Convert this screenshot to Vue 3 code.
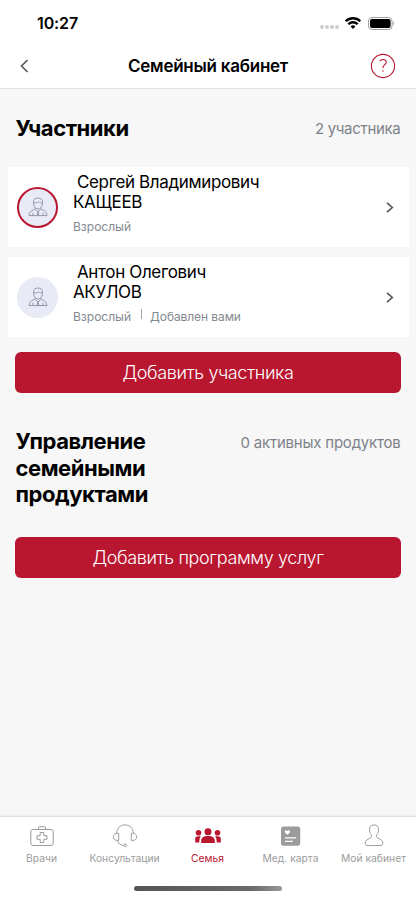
<script setup>
const members = [
  { name: 'Сергей Владимирович', surname: 'КАЩЕЕВ', tags: ['Взрослый'], active: true },
  { name: 'Антон Олегович', surname: 'АКУЛОВ', tags: ['Взрослый', 'Добавлен вами'], active: false },
]
const tabs = [
  { id: 'doctors', label: 'Врачи' },
  { id: 'consult', label: 'Консультации' },
  { id: 'family', label: 'Семья' },
  { id: 'record', label: 'Мед. карта' },
  { id: 'profile', label: 'Мой кабинет' },
]
</script>

<template>
  <div class="screen">
    <div class="status">
      <span class="time">10:27</span>
      <div class="indicators">
        <svg class="dots" width="20" height="4" viewBox="0 0 20 4" fill="#cbcbcb">
          <circle cx="2" cy="2" r="1.9" /><circle cx="7" cy="2" r="1.9" /><circle cx="12" cy="2" r="1.9" /><circle cx="17" cy="2" r="1.9" />
        </svg>
        <svg class="wifi" width="16" height="12" viewBox="0 0 16 12" fill="none" stroke="#000" stroke-width="2.3">
          <path d="M.7 4.300a10.300 10.300 0 0 1 14.600 0" /><path d="M3.300 7.200a6.600 6.600 0 0 1 9.400 0" /><path d="M8 11.900 5.600 9.500a3.400 3.400 0 0 1 4.800 0Z" fill="#000" stroke="none" />
        </svg>
        <svg width="27" height="13" viewBox="0 0 27 13">
          <rect x=".5" y=".5" width="23.6" height="12" rx="3.5" fill="none" stroke="#a0a0a0" />
          <rect x="2" y="2" width="20.6" height="9" rx="2" />
          <path d="M25.200 4.800v3.400c1.300-.6 1.300-2.800 0-3.400Z" fill="#999" />
        </svg>
      </div>
    </div>
    <header class="header">
      <svg class="back" width="9" height="14" viewBox="0 0 9 14" fill="none" stroke="#555" stroke-width="1.6"><path d="M7.5 1 1.5 7l6 6" /></svg>
      <h1>Семейный кабинет</h1>
      <svg class="help" width="26" height="26" viewBox="0 0 26 26" fill="none" stroke="#b91630" stroke-width="1.1">
        <circle cx="13" cy="13" r="11.6" />
        <path d="M9.900 8.300c.7-1.200 1.700-1.800 3-1.800 2 0 3.300 1.100 3.300 2.700 0 2.500-3.200 2.700-3.200 5v1M13 17.200v1.500" />
      </svg>
    </header>

    <main>
      <div class="section members-head">
        <h2>Участники</h2><span class="count c1">2 участника</span>
      </div>
      <div class="cards">
        <article v-for="m in members" :key="m.surname" class="card">
          <div class="avatar" :class="{ active: m.active }">
            <svg width="20" height="20" viewBox="0 0 20 20" fill="none" stroke="#8b8fa3" stroke-width=".9" stroke-linejoin="round">
              <path d="M5.500 5.600C5.300 2.600 7 1 10 1s4.700 1.600 4.500 4.600c0 3.800-1.700 6.300-4.500 6.300s-4.500-2.500-4.500-6.300ZM5.500 5.400c2.500.9 4 .7 5.200-.6 1 1 2.200 1.200 3.800.8M7.400 10.800c-.2 1.500-1 1.800-2.500 2.300C2.600 13.900 1.400 15.500 1 18.600h18c-.4-3.100-1.600-4.700-3.900-5.500-1.500-.5-2.300-.8-2.500-2.300" />
              <path d="m7.200 12.300 2.800 2.500 2.800-2.500M10 14.800l-1 3.800M10 14.800l1 3.800M4.900 15.800v2.800M15.100 15.800v2.800" />
            </svg>
          </div>
          <div class="info">
            <div class="name"><span class="first">{{ m.name }}</span><span>{{ m.surname }}</span></div>
            <div class="tags"><span v-for="t in m.tags" :key="t">{{ t }}</span></div>
          </div>
          <svg class="chevron" width="8" height="11" viewBox="0 0 8 11" fill="none" stroke="#555" stroke-width="1.6"><path d="m1 .9 5.3 4.6L1 10.1" /></svg>
        </article>
      </div>
      <button class="b1">Добавить участника</button>
      <div class="section products-head">
        <h2>Управление<br>семейными<br>продуктами</h2><span class="count c2">0 активных продуктов</span>
      </div>
      <button class="b2">Добавить программу услуг</button>
    </main>

    <nav>
      <div v-for="t in tabs" :key="t.id" class="tab" :class="t.id">
        <svg width="28" height="26" viewBox="0 0 28 26" fill="none" stroke="#9b9b9b" stroke-width="1">
          <template v-if="t.id === 'doctors'">
            <rect x="2.8" y="5.500" width="22.4" height="16" rx="2.2" />
            <path d="M10.500 5.500V4c0-.8.5-1.300 1.300-1.300h4.400c.8 0 1.300.5 1.300 1.300v1.500M12.200 8.500h3.600v3.200H19v3.600h-3.200v3.200h-3.600v-3.200H9v-3.600h3.200Z" />
          </template>
          <template v-else-if="t.id === 'consult'">
            <path d="M5.500 9.300C6 4.100 9.200.9 14 .9s8 3.200 8.500 8.400M7.700 9.300v7.100H6.200c-5.200 0-5.200-7.100 0-7.100ZM20.300 9.300v7.100h1.500c5.200 0 5.200-7.100 0-7.100ZM6.700 16.500c.7 3.500 2.800 4.800 6 4.900" />
            <circle cx="14.2" cy="21.300" r="1.4" />
          </template>
          <g v-else-if="t.id === 'family'" fill="#b91630" stroke="none">
            <circle cx="14" cy="7.800" r="3.500" /><circle cx="4.500" cy="8.800" r="2.800" /><circle cx="23.500" cy="8.800" r="2.800" />
            <path d="M7.200 19.100v-2.300c0-3.600 3-4.900 6.800-4.900s6.800 1.300 6.800 4.900v2.300ZM1.200 18.600v-4c0-2.200 2.500-2.700 5.800-2.100-1.300 1.200-1.700 3.100-1.700 6.100ZM26.800 18.600v-4c0-2.200-2.500-2.700-5.800-2.100 1.300 1.200 1.700 3.100 1.700 6.100Z" />
          </g>
          <template v-else-if="t.id === 'record'">
            <rect x="4" y="2.500" width="19.200" height="19.200" rx="2.500" fill="#9b9b9b" stroke="none" />
            <path d="M10.400 10.900 8.200 8.700c-1.500-1.600.8-3.600 2.200-1.800 1.400-1.800 3.700.2 2.200 1.800Z" fill="#fff" stroke="none" />
            <path d="M7.900 13.800h11.400M7.900 17.300h8" stroke="#fff" stroke-width="1.3" />
          </template>
          <path v-else d="M14 .9c-3 0-4.600 2-4.500 4.600 0 2.400.5 3.500 1.500 4.800.8 1.200.8 3.100-.7 3.800-3.100 1.400-5.100 2.400-5.100 5.100 0 1.500 1 2.400 2.800 2.400h12c1.800 0 2.800-.9 2.800-2.400 0-2.700-2-3.700-5.100-5.100-1.500-.7-1.500-2.600-.7-3.800 1-1.300 1.500-2.400 1.500-4.800.1-2.600-1.500-4.600-4.500-4.600Z" />
        </svg>
        <span>{{ t.label }}</span>
      </div>
    </nav>
    <div class="home"><i></i></div>
  </div>
</template>

<style>
body { margin: 0; background: #f7f7f7; }
</style>

<style scoped>
* { box-sizing: border-box; }
.screen { width: 416px; height: 900px; display: flex; flex-direction: column; background: #f7f7f7; font-family: Inter, "Liberation Sans", sans-serif; color: #000; overflow: hidden; }
.status { height: 44px; background: #fff; display: flex; justify-content: space-between; padding: 13px 21px 0 37px; }
.time { font-size: 16px; line-height: 20px; font-weight: 600; letter-spacing: -.1px; }
.indicators { display: flex; height: 20px; align-items: center; }
.dots { margin-top: 8px; margin-right: 5px; }
.wifi { margin-right: 7px; }
.header { height: 45px; background: #fff; border-bottom: 1px solid #e2e2e2; display: flex; align-items: center; justify-content: space-between; padding: 0 20px; }
.back { margin-right: 17px; }
h1 { margin: 0; font-size: 17px; line-height: 22px; font-weight: 600; letter-spacing: -.25px; }
main { flex: 1; }
.section { display: flex; justify-content: space-between; padding: 0 15.500px; }
.members-head { padding-top: 26px; height: 78px; }
h2 { margin: 0; font-size: 22px; line-height: 26.5px; font-weight: 700; letter-spacing: -.45px; }
.count { font-size: 15px; line-height: 20px; color: #7d828a; margin-top: 5px; letter-spacing: -.22px; }
.c1 { margin-top: 4px; letter-spacing: -.3px; }
.cards { display: flex; flex-direction: column; gap: 10px; padding: 0 7px 0 8px; }
.card { height: 80px; background: #fff; display: flex; align-items: center; padding: 0 15px 0 9px; }
.avatar { width: 41px; height: 41px; border-radius: 50%; background: #e8ebf6; display: flex; align-items: center; justify-content: center; }
.avatar.active { border: 2px solid #b91630; }
.info { flex: 1; padding-left: 15px; align-self: flex-start; padding-top: 5px; }
.name { font-size: 17px; line-height: 20px; display: flex; flex-direction: column; letter-spacing: -.36px; }
.first { padding-left: 4px; }
.tags { display: flex; font-size: 12px; line-height: 16px; color: #858991; margin-top: 7px; }
.tags span + span { margin-left: 10px; padding-left: 9px; letter-spacing: -.08px; background: linear-gradient(#a5a5a5, #a5a5a5) 0 0 / 1px 10px no-repeat; }
button { display: block; width: 386px; height: 41px; margin: 0 0 0 15px; border: 0; border-radius: 6px; background: #b91630; color: #fff; font: 350 18px/41px Inter, sans-serif; letter-spacing: -.38px; padding: 0; }
.b1 { margin-top: 15px; }
.products-head { padding-top: 35px; height: 144px; }
nav { height: 63px; background: #fff; border-top: 1px solid #dfdfdf; display: grid; grid-template-columns: repeat(5, 83px); box-shadow: 0 -1px 1px #eee; }
.tab { display: flex; flex-direction: column; align-items: center; padding-top: 7px; font-size: 10.3px; line-height: 14px; color: #9b9b9b; white-space: nowrap; }
.tab span { margin-top: 1px; }
.tab.family { color: #b91630; }
.home { height: 21px; background: #fff; display: flex; justify-content: center; padding-top: 7px; }
.home i { width: 148px; height: 5px; border-radius: 3px; background: linear-gradient(90deg, #555, #6a6a6a 80%, #999); }
</style>
